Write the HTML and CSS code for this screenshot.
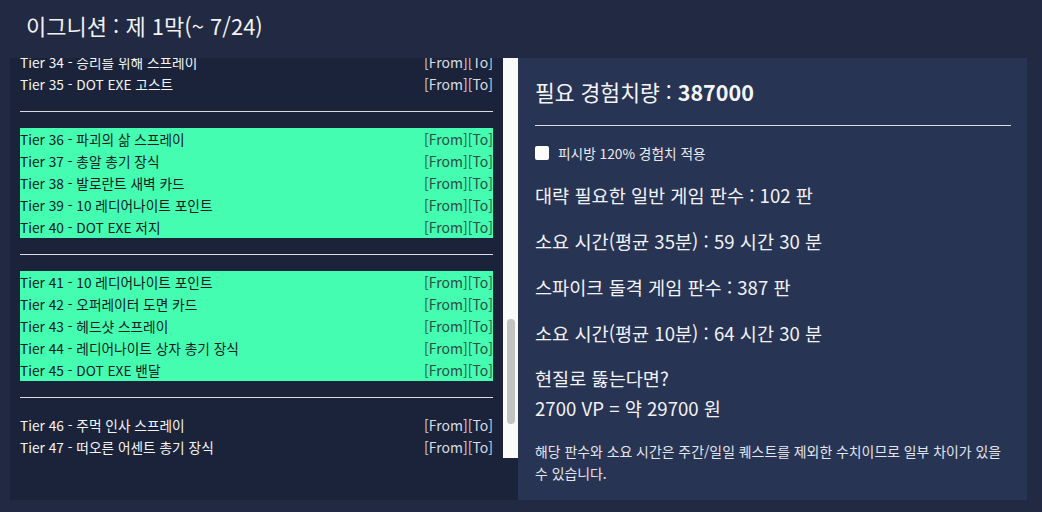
FILE: index.html
```html
<!DOCTYPE html>
<html lang="ko">
<head>
<meta charset="utf-8">
<title>이그니션 : 제 1막</title>
<link rel="stylesheet" href="styles.css">
</head>
<body>
<div class="page">
  <header class="title">이그니션 : 제 1막(~ 7/24)</header>
  <main class="content">
    <section class="tiers">
      <div class="viewport">
        <div class="list">
          <div class="group first">
            <div class="row"><span class="name">Tier 34 - 승리를 위해 스프레이</span><span class="links">[From][To]</span></div>
            <div class="row"><span class="name">Tier 35 - DOT EXE 고스트</span><span class="links">[From][To]</span></div>
          </div>
          <hr class="sep">
          <div class="group hl">
            <div class="row"><span class="name">Tier 36 - 파괴의 삶 스프레이</span><span class="links">[From][To]</span></div>
            <div class="row"><span class="name">Tier 37 - 총알 총기 장식</span><span class="links">[From][To]</span></div>
            <div class="row"><span class="name">Tier 38 - 발로란트 새벽 카드</span><span class="links">[From][To]</span></div>
            <div class="row"><span class="name">Tier 39 - 10 레디어나이트 포인트</span><span class="links">[From][To]</span></div>
            <div class="row"><span class="name">Tier 40 - DOT EXE 저지</span><span class="links">[From][To]</span></div>
          </div>
          <hr class="sep">
          <div class="group hl">
            <div class="row"><span class="name">Tier 41 - 10 레디어나이트 포인트</span><span class="links">[From][To]</span></div>
            <div class="row"><span class="name">Tier 42 - 오퍼레이터 도면 카드</span><span class="links">[From][To]</span></div>
            <div class="row"><span class="name">Tier 43 - 헤드샷 스프레이</span><span class="links">[From][To]</span></div>
            <div class="row"><span class="name">Tier 44 - 레디어나이트 상자 총기 장식</span><span class="links">[From][To]</span></div>
            <div class="row"><span class="name">Tier 45 - DOT EXE 밴달</span><span class="links">[From][To]</span></div>
          </div>
          <hr class="sep">
          <div class="group">
            <div class="row"><span class="name">Tier 46 - 주먹 인사 스프레이</span><span class="links">[From][To]</span></div>
            <div class="row"><span class="name">Tier 47 - 떠오른 어센트 총기 장식</span><span class="links">[From][To]</span></div>
          </div>
        </div>
        <div class="scrollbar"><div class="thumb"></div></div>
      </div>
    </section>
    <section class="info">
      <h2 class="need">필요 경험치량 : <b>387000</b></h2>
      <hr class="rule">
      <label class="pcbang"><input type="checkbox" class="check"><span>피시방 120% 경험치 적용</span></label>
      <p class="stat first">대략 필요한 일반 게임 판수 : 102 판</p>
      <p class="stat">소요 시간(평균 35분) : 59 시간 30 분</p>
      <p class="stat">스파이크 돌격 게임 판수 : 387 판</p>
      <p class="stat">소요 시간(평균 10분) : 64 시간 30 분</p>
      <p class="cash">현질로 뚫는다면?<br>2700 VP = 약 29700 원</p>
      <p class="note">해당 판수와 소요 시간은 주간/일일 퀘스트를 제외한 수치이므로 일부 차이가 있을 수 있습니다.</p>
    </section>
  </main>
</div>
</body>
</html>
```
FILE: styles.css
```css
* { box-sizing: border-box; }
html, body {
  margin: 0;
  padding: 0;
  background: #212a42;
  font-family: "Noto Sans CJK KR", "Noto Sans", sans-serif;
  color: #eef0f4;
}
.page {
  width: 1042px;
  height: 512px;
  overflow: hidden;
}
.title {
  height: 58px;
  padding: 8px 26px 0;
  font-size: 22px;
  line-height: 34px;
  font-weight: 400;
  color: #f2f3f6;
}
.content {
  display: flex;
  margin-left: 10px;
  width: 1017px;
  height: 442px;
}
.tiers {
  width: 508px;
  background: #1a2339;
}
.viewport {
  display: flex;
  height: 400px;
}
.list {
  flex: 1;
  overflow: hidden;
  padding: 0 10px;
}
.group.first { margin-top: -7px; }
.row {
  display: flex;
  justify-content: space-between;
  height: 22px;
  line-height: 22px;
  font-size: 13.7px;
  color: #f4f5f7;
  white-space: nowrap;
}
.links { color: #d8dbe2; font-size: 14px; }
.hl { background: #44fdb0; }
.hl .row { color: #121a26; }
.hl .links { color: #2c4f45; }
.sep {
  border: 0;
  height: 1px;
  background: #d9dbe0;
  margin: 16px 0;
}
.scrollbar {
  width: 15px;
  background: #fafafa;
}
.thumb {
  width: 8px;
  height: 105px;
  margin: 261px 0 0 4px;
  border-radius: 4px;
  background: #c2c2c2;
}
.info {
  width: 509px;
  background: #283453;
  padding: 19px 16px 0 17px;
  display: flex;
  flex-direction: column;
}
.need {
  margin: 0;
  font-size: 21.5px;
  line-height: 30px;
  font-weight: 400;
  color: #f4f5f8;
}
.need b { font-weight: 700; }
.rule {
  border: 0;
  height: 1px;
  background: #d9dbe0;
  margin: 18px 0 0;
}
.pcbang {
  display: flex;
  align-items: center;
  gap: 9px;
  margin-top: 17px;
  height: 20px;
  font-size: 13.7px;
  color: #e8eaef;
}
.check {
  appearance: none;
  -webkit-appearance: none;
  width: 14px;
  height: 14px;
  margin: 0;
  border-radius: 2px;
  background: #ffffff;
  border: 0;
}
.stat {
  margin: 20px 0 0;
  font-size: 18.6px;
  line-height: 26px;
  color: #f1f2f6;
}
.stat.first { margin-top: 19px; }
.cash {
  margin: 17px 0 0;
  font-size: 18.6px;
  line-height: 30px;
  color: #f1f2f6;
}
.note {
  margin: 17px 0 0;
  font-size: 13.9px;
  line-height: 22px;
  color: #e3e6ec;
}
```
